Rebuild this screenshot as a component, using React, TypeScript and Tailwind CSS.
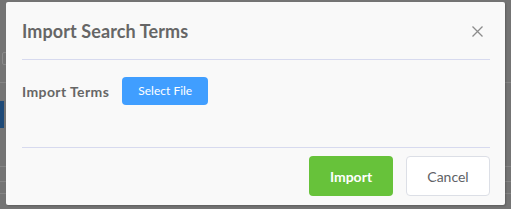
import React from "react";

export default function App() {
  return (
    <div
      className="relative w-[511px] h-[209px] overflow-hidden bg-[#747474]"
      style={{ fontFamily: "Lato, 'Open Sans', sans-serif" }}
    >
      {/* faint page content behind the overlay */}
      <div className="absolute left-[2px] top-[52px] w-[8px] h-[13px] border border-[#8a8a8a] rounded-[2px]" />
      <div className="absolute left-0 top-[82px] w-[511px] h-px bg-[#858585]" />
      <div className="absolute left-0 top-[101px] w-[4px] h-[27px] bg-[#1e4a78]" />
      <div className="absolute left-0 top-[166px] w-[511px] h-px bg-[#858585]" />
      <div className="absolute left-0 top-[181px] w-[511px] h-px bg-[#858585]" />
      <div className="absolute left-0 top-[193px] w-[511px] h-px bg-[#858585]" />

      <div className="relative pl-[6px] pt-[2px]">
        <div className="w-[499px] h-[203px] bg-[#f9f9f9] rounded-[2px] shadow-[1px_1px_2px_rgba(0,0,0,0.2)] pl-[16px] pr-[15px] flex flex-col">
          <div className="h-[58px] flex items-center justify-between border-b border-[#d7daef] pt-[1px]">
            <span className="text-[18px] font-bold text-[#666666] tracking-[0.1px]">
              Import Search Terms
            </span>
            <svg width="11" height="11" viewBox="0 0 11 11" className="mr-[7px]">
              <path d="M0.5 0.5 L10.5 10.5 M10.5 0.5 L0.5 10.5" stroke="#8c8c8c" strokeWidth="1.3" />
            </svg>
          </div>
          <div className="h-[88px] border-b border-[#d7daef] pt-[17px]">
            <div className="flex items-center gap-[13px]">
              <span className="text-[14px] font-bold text-[#666666] tracking-[0.4px]">Import Terms</span>
              <button className="w-[86px] h-[28px] rounded-[4px] bg-[#409eff] text-white text-[12px] flex items-center justify-center">
                Select File
              </button>
            </div>
          </div>
          <div className="flex justify-end items-start pt-[8px] gap-[13px]">
            <button className="w-[84px] h-[40px] rounded-[4px] bg-[#67c23a] text-white text-[14px] font-bold flex items-center justify-center">
              Import
            </button>
            <button className="w-[84px] h-[40px] rounded-[4px] bg-white border border-[#dcdfe6] text-[#606266] text-[14px] flex items-center justify-center">
              Cancel
            </button>
          </div>
        </div>
      </div>
    </div>
  );
}
